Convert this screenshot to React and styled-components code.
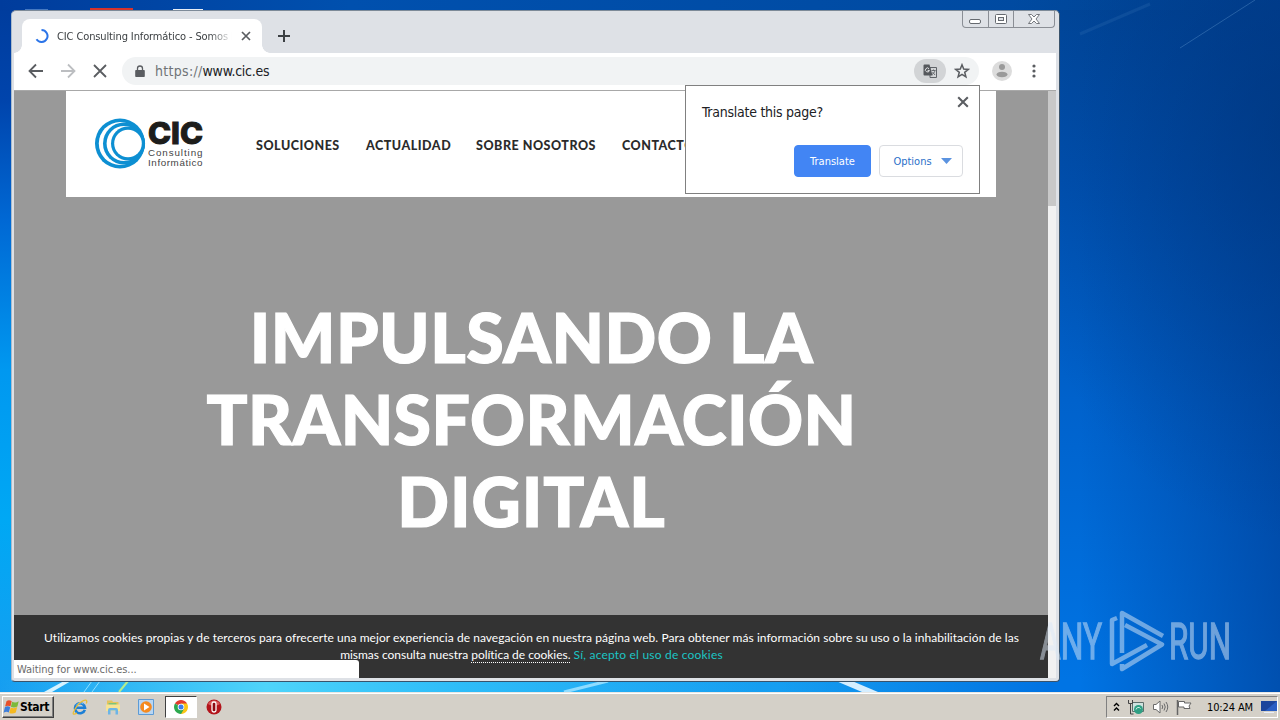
import React from 'react';
import styled, { createGlobalStyle } from 'styled-components';

const GlobalStyle = createGlobalStyle`
  * {
    box-sizing: border-box;
  }
  body {
    margin: 0;
    overflow: hidden;
    font-family: 'DejaVu Sans Condensed', 'DejaVu Sans', sans-serif;
    font-size: 11px;
  }
  button {
    font-family: inherit;
    padding: 0;
  }
`;

const Desktop = styled.div`
  position: relative;
  display: flex;
  flex-direction: column;
  width: 1280px;
  height: 720px;
  overflow: hidden;
  background: radial-gradient(ellipse 300px 420px at 1300px 120px, rgba(0, 44, 100, 0.4), rgba(0, 50, 120, 0) 100%),
    linear-gradient(90deg, transparent 1080px, rgba(0, 62, 150, 0.7) 1290px),
    linear-gradient(90deg, #003c9c, #0050ae 350px, #00489c 1280px) 0 0 / 100% 10px no-repeat,
    linear-gradient(180deg, #00469a 0, #0050b0 180px, #0062cc 400px, #0074e4 680px) 1050px 0 / 230px 100% no-repeat,
    linear-gradient(90deg, transparent 0 780px, #0072e2 1050px),
    linear-gradient(180deg, #003c9c 0, #0044ac 100px, #0068d4 220px, #0098f0 370px, #00a8f4 520px, #1a9cf0 720px);
`;
const Wallpaper = styled.svg`
  position: absolute;
  top: 0;
  left: 0;
`;
const Workspace = styled.main`
  flex: 1;
  padding: 10px 0 0 11px;
`;
const Window = styled.section`
  position: relative;
  display: flex;
  flex-direction: column;
  width: 1049px;
  height: 672px;
  padding: 0 3px 3px 2px;
  border: 1px solid #39536c;
  border-top-color: #7d8a98;
  border-left-color: #a9bacb;
  border-radius: 5px 5px 4px 4px;
  background: #dee1e6;
`;
const TabStrip = styled.div`
  display: flex;
  align-items: flex-end;
  height: 42px;
  padding-left: 8px;
`;
const Tab = styled.div`
  position: relative;
  display: flex;
  align-items: center;
  width: 240px;
  height: 34px;
  padding: 0 11px 0 13px;
  border-radius: 8px 8px 0 0;
  background: #fff;
  &::before,
  &::after {
    content: '';
    position: absolute;
    bottom: 0;
    width: 8px;
    height: 8px;
  }
  &::before {
    left: -8px;
    background: radial-gradient(circle at 0 0, transparent 7.5px, #fff 8px);
  }
  &::after {
    right: -8px;
    background: radial-gradient(circle at 100% 0, transparent 7.5px, #fff 8px);
  }
`;
const TabTitle = styled.span`
  flex: 1;
  margin: 0 9px 0 8px;
  overflow: hidden;
  white-space: nowrap;
  letter-spacing: -0.12px;
  color: #3c4043;
  mask-image: linear-gradient(90deg, #000 152px, transparent 176px);
`;
const NewTab = styled.div`
  display: flex;
  align-items: center;
  height: 34px;
  margin-left: 15px;
`;
const Caption = styled.div`
  position: absolute;
  top: 0;
  right: 4px;
  display: flex;
  height: 17px;
  border: 1px solid #8a8e95;
  border-top: none;
  border-radius: 0 0 4px 4px;
`;
const CaptionButton = styled.div`
  display: flex;
  align-items: center;
  justify-content: center;
  width: ${(props) => props.$width}px;
  border-left: ${(props) => (props.$first ? 'none' : '1px solid #8a8e95')};
`;
const Toolbar = styled.div`
  display: flex;
  align-items: center;
  height: 38px;
  padding: 0 14px 1px 14px;
  border-bottom: 1px solid #a8a8a8;
  background: #fff;
`;
const NavIcons = styled.div`
  display: flex;
  gap: 16px;
`;
const Omnibox = styled.div`
  display: flex;
  align-items: center;
  width: 857px;
  height: 28px;
  margin: 0 13px 0 14px;
  padding: 0 9px 0 12px;
  border-radius: 14px;
  background: #f1f3f4;
`;
const Url = styled.span`
  flex: 1;
  margin-left: 9px;
  font-size: 14px;
  letter-spacing: -0.25px;
  color: #202124;
`;
const Scheme = styled.span`
  letter-spacing: 0.3px;
  color: #6f7377;
`;
const TranslateChip = styled.div`
  display: flex;
  align-items: center;
  justify-content: center;
  width: 32px;
  height: 24px;
  margin-right: 8px;
  border-radius: 12px;
  background: #d2d4d6;
`;
const Avatar = styled.div`
  height: 20px;
  margin-right: 14px;
`;
const Viewport = styled.div`
  display: flex;
  flex: 1;
  background: #f1f1f1;
`;
const Page = styled.div`
  display: flex;
  flex-direction: column;
  align-items: center;
  width: 1034px;
  background: #999;
`;
const Scrollbar = styled.div`
  width: 8px;
`;
const Thumb = styled.div`
  height: 115px;
  background: #c8c8c8;
`;
const SiteHeader = styled.header`
  display: flex;
  align-items: center;
  width: 930px;
  height: 106px;
  padding: 0 0 0 29px;
  background: #fff;
`;
const Menu = styled.nav`
  display: flex;
  gap: 26px;
  margin: 2px 0 0 50px;
`;
const MenuItem = styled.a`
  width: ${(props) => props.$width}px;
  font-family: Lato, sans-serif;
  font-size: 12.5px;
  font-weight: 900;
  letter-spacing: 0.52px;
  white-space: nowrap;
  color: #2b2b2b;
`;
const Headline = styled.h1`
  flex: 1;
  margin: 0;
  padding: 99px 0 0 1px;
  font-family: Lato, sans-serif;
  font-size: 68px;
  font-weight: 900;
  line-height: 82px;
  text-align: center;
  color: #fff;
  -webkit-text-stroke: 1.2px #fff;
`;
const Line = styled.span`
  display: block;
  letter-spacing: ${(props) => props.$spacing}px;
`;
const CookieBar = styled.footer`
  width: 100%;
  height: 63px;
  padding: 14px 0 0 1px;
  font-family: Lato, sans-serif;
  font-size: 12px;
  line-height: 17px;
  letter-spacing: 0.05px;
  text-align: center;
  white-space: nowrap;
  color: #fff;
  background: #333;
`;
const CookieTail = styled.span`
  letter-spacing: -0.03px;
`;
const PolicyLink = styled.a`
  border-bottom: 1px dotted #fff;
`;
const AcceptLink = styled.a`
  letter-spacing: 0.2px;
  color: #1cc5c5;
`;
const Status = styled.div`
  position: absolute;
  left: 2px;
  bottom: 3px;
  width: 345px;
  height: 18px;
  padding-left: 3px;
  line-height: 19px;
  letter-spacing: -0.05px;
  border-radius: 0 3px 0 0;
  color: #6b6b6b;
  background: #fff;
`;
const Popup = styled.div`
  position: absolute;
  top: 74px;
  left: 673px;
  display: flex;
  flex-direction: column;
  justify-content: space-between;
  width: 295px;
  height: 109px;
  padding: 10px 16px 16px;
  border: 1px solid #808080;
  background: #fff;
`;
const PopupTop = styled.div`
  display: flex;
  justify-content: space-between;
  margin-right: -6px;
`;
const PopupTitle = styled.div`
  padding-top: 8px;
  font-size: 14px;
  letter-spacing: -0.26px;
  color: #202124;
`;
const PopupButtons = styled.div`
  display: flex;
  justify-content: flex-end;
  gap: 8px;
`;
const Button = styled.button`
  display: flex;
  align-items: center;
  justify-content: center;
  gap: 9px;
  width: ${(props) => (props.$primary ? 77 : 84)}px;
  height: 32px;
  padding-left: ${(props) => (props.$primary ? 0 : 3)}px;
  border: 1px solid ${(props) => (props.$primary ? '#4285f4' : '#dadce0')};
  border-radius: 4px;
  font-size: 11px;
  color: ${(props) => (props.$primary ? '#fff' : '#2a6fc9')};
  background: ${(props) => (props.$primary ? '#4285f4' : '#fff')};
`;
const Taskbar = styled.div`
  position: relative;
  display: flex;
  align-items: center;
  height: 28px;
  padding: 1px 2px 0;
  border-top: 1px solid #e9e7e3;
  box-shadow: inset 0 1px #fff;
  background: #d4d0c8;
`;
const StartButton = styled.div`
  display: flex;
  align-items: center;
  width: 52px;
  height: 22px;
  border: 1px solid;
  border-color: #fff #404040 #404040 #fff;
  box-shadow: inset -1px -1px #808080;
  font-size: 12px;
  font-weight: 700;
  letter-spacing: -0.3px;
  color: #000;
`;
const QuickLaunch = styled.div`
  display: flex;
  align-items: center;
  gap: 17px;
  margin-left: 18px;
`;
const ActiveTask = styled.div`
  display: flex;
  align-items: center;
  justify-content: center;
  width: 32px;
  height: 22px;
  margin: 0 9px 0 11px;
  border: 1px solid;
  border-color: #404040 #fff #fff #404040;
  background: #fff;
`;
const Tray = styled.div`
  display: flex;
  align-items: center;
  gap: 7px;
  width: 172px;
  height: 22px;
  margin-left: auto;
  padding-left: 6px;
  border: 1px solid;
  border-color: #808080 #fff #fff #808080;
`;
const Clock = styled.span`
  width: 47px;
  margin: 0 0 0 7px;
  white-space: nowrap;
  letter-spacing: -0.12px;
  color: #000;
`;
const Watermark = styled.svg`
  position: absolute;
  left: 1038px;
  top: 608px;
`;

const Cross = ({ size, width }) => (
  <svg width={size} height={size} viewBox="0 0 10 10" stroke="#5a5d61" strokeWidth={width}>
    <path d="M1 1l8 8M9 1L1 9" />
  </svg>
);

const Logo = () => (
  <svg width="111" height="52" viewBox="0 0 111 52">
    <circle cx="25" cy="25.500" r="25" fill="#0d8fd2" />
    <circle cx="25.200" cy="25.500" r="21.400" fill="#fff" />
    <circle cx="29" cy="25.500" r="21" fill="#0d8fd2" />
    <circle cx="29.200" cy="25.500" r="17.600" fill="#fff" />
    <circle cx="33" cy="25.500" r="17" fill="#0d8fd2" />
    <circle cx="33" cy="25.500" r="13.800" fill="#fff" />
    <text x="53" y="26" fontFamily="Inter" fontWeight="800" fontSize="30" textLength="55" lengthAdjust="spacingAndGlyphs" fill="#1d1d1b" stroke="#1d1d1b">
      CIC
    </text>
    <text x="53" y="37.500" fontFamily="Liberation Sans" fontSize="9.800" textLength="54.500" fill="#444">
      Consulting
    </text>
    <text x="53" y="47.500" fontFamily="Liberation Sans" fontSize="9.800" textLength="54.500" fill="#444">
      Informático
    </text>
  </svg>
);

const TranslateIcon = () => (
  <svg width="15" height="15" viewBox="0 0 15 15">
    <path d="M7 3.500h6.500v10H7z" fill="#d2d4d6" stroke="#5f6368" />
    <path d="M8.500 6.500h4M10.500 5.500v1M12 6.500c-.5 2-1.500 3-3 4M9.500 8l2.500 3" fill="none" stroke="#5f6368" strokeWidth=".9" />
    <path d="M1.500.5h5L9.500 11.500h-8a1 1 0 0 1-1-1v-9a1 1 0 0 1 1-1z" fill="#55585c" />
    <path d="M6 4.700a2 2 0 1 0 .4 1.700H4.600" fill="none" stroke="#e4e5e7" />
  </svg>
);

const WindowsFlag = () => (
  <svg width="17" height="16" viewBox="0 0 17 16">
    <path d="M3.500 2.300c2-1.600 3.700-1 5.200 0L7.400 7.500c-1.700-1-3.300-1-5.300 0z" fill="#e8502a" />
    <path d="M9.200 2.700c2 1 4.300 1 6.500-.5L14.400 7.500c-2 1.300-4.500 1.300-6.500.3z" fill="#7db93b" />
    <path d="M1.900 8.200c2-1.300 3.700-1 5.300 0L5.800 13.600c-1.700-1-3.200-1-5.200.2z" fill="#3d7edb" />
    <path d="M7.700 8.500c2 1 4.500 1 6.500-.4L12.800 13.500c-2 1.300-4.500 1.300-6.500.4z" fill="#f5b921" />
  </svg>
);

const Explorer = () => (
  <svg width="16" height="16" viewBox="0 0 16 16">
    <path d="M12.800 10.800A5 5 0 1 1 13 8.700H4.500" fill="none" stroke="#1c7fd6" strokeWidth="2.600" />
    <path d="M4.300 6.500a4.500 4.500 0 0 1 7-1.500" fill="none" stroke="#7cc8f5" strokeWidth=".9" />
    <path d="M2.300 11.500C0 15.500 1.500 16 5 14.200M9 3C13 .2 16 .3 14.300 4.500M2.300 11.500C4 8 6 5 9 3" fill="none" stroke="#e9bd35" strokeWidth="1.300" />
  </svg>
);

const Folder = () => (
  <svg width="16" height="16" viewBox="0 0 16 16">
    <path d="M2 1.500h5l1 1.500h5.500v8H2z" fill="#e5c35c" />
    <path d="M3.500 4h8v5h-8z" fill="#7cc47a" />
    <path d="M1 5.500h14v6.500H1z" fill="#f7e395" />
    <path d="M3 15.500V11a2 2 0 0 1 2-2h6a2 2 0 0 1 2 2v4.500h-2.500V11.500h-5v4z" fill="#6db5e6" />
  </svg>
);

const MediaPlayer = () => (
  <svg width="16" height="16" viewBox="0 0 16 16">
    <path d="M.5.5h15v15H.5z" fill="#b9d6f2" stroke="#5c9bd6" />
    <circle cx="8" cy="8" r="5.800" fill="#f58a1f" />
    <path d="M6 4.500L11.500 8 6 11.500z" fill="#fff" />
  </svg>
);

const Chrome = () => (
  <svg width="14" height="14" viewBox="0 0 14 14">
    <path d="M7 7L.94 3.500a7 7 0 0 1 12.120 0z" fill="#e33b2e" />
    <path d="M7 7V3.500h6.060A7 7 0 0 1 7 14z" fill="#fbc516" />
    <path d="M7 7l3 2L7 14A7 7 0 0 1 .94 3.500z" fill="#2da94f" />
    <circle cx="7" cy="7" r="3.300" fill="#fff" />
    <circle cx="7" cy="7" r="2.500" fill="#3b7ded" />
  </svg>
);

const Opera = () => (
  <svg width="16" height="16" viewBox="0 0 16 16">
    <circle cx="8" cy="8" r="7.500" fill="#b3141b" />
    <path d="M2 5a7 7 0 0 1 12 0c-3 2-9 2-12 0z" fill="#d9595b" />
    <rect x="6" y="3" width="4" height="10" rx="1.800" fill="#8d0a12" stroke="#fff" strokeWidth="1.300" />
  </svg>
);

const menu = [
  ['SOLUCIONES', 84],
  ['ACTUALIDAD', 84],
  ['SOBRE NOSOTROS', 120],
  ['CONTACTO', 74],
];

const App = () => {
  return (
    <Desktop>
      <GlobalStyle />
      <Wallpaper width="1280" height="720">
        <defs>
          <linearGradient id="glow">
            <stop offset="0" stopColor="#4fd4fa" stopOpacity="0" />
            <stop offset=".35" stopColor="#4fd4fa" />
            <stop offset=".6" stopColor="#35c4fa" stopOpacity=".8" />
            <stop offset="1" stopColor="#35c4fa" stopOpacity="0" />
          </linearGradient>
        </defs>
        <rect y="680" width="760" height="12" fill="url(#glow)" />
        <path d="M44 692l20-11h7l-19 11z" fill="#d6f3ff" />
        <path d="M84 692l8-11M92 692l8-11" stroke="#8fe0ff" />
        <path d="M119 692l9-11" stroke="#b5ec8c" strokeWidth="2" />
        <path d="M564 692l44-11" stroke="#8fdcff" strokeWidth="3" />
        <path d="M836 681h16l26 11h-16z" fill="#d5eeff" />
        <path d="M1180 48L1255 0" stroke="#6ba4d8" strokeOpacity=".35" />
        <path d="M1080 34l70-30" stroke="#6ba4d8" strokeOpacity=".12" strokeWidth="3" />
        <path d="M25 10h23" stroke="#8db4e4" strokeWidth="1" />
        <path d="M90 9h43" stroke="#d8332b" strokeWidth="2" />
        <path d="M173 9.500h30" stroke="#e8eef6" strokeWidth="1" />
      </Wallpaper>
      <Workspace>
        <Window>
          <TabStrip>
            <Tab>
              <svg width="14" height="14" viewBox="0 0 14 14" fill="none" stroke="#2b74e8" strokeWidth="2">
                <path d="M6.500 1a6 6 0 1 1-5 9.300" />
              </svg>
              <TabTitle>CIC Consulting Informático - Somos l</TabTitle>
              <Cross size={10} width={1.7} />
            </Tab>
            <NewTab>
              <svg width="14" height="14" viewBox="0 0 14 14" stroke="#3c4043" strokeWidth="2">
                <path d="M7 1v12M1 7h12" />
              </svg>
            </NewTab>
          </TabStrip>
          <Caption>
            <CaptionButton $width={25} $first>
              <svg width="13" height="17" fill="#fff" stroke="#666a70">
                <rect x=".5" y="8.500" width="11" height="4" rx="1.500" />
              </svg>
            </CaptionButton>
            <CaptionButton $width={25}>
              <svg width="12" height="11" fill="#fff" stroke="#666a70">
                <rect x=".5" y=".5" width="11" height="9" rx="1" />
                <rect x="3.500" y="3.500" width="5" height="3" fill="#dee1e6" />
              </svg>
            </CaptionButton>
            <CaptionButton $width={41}>
              <svg width="12" height="10" viewBox="0 0 12 10">
                <path d="M.5.5h3L6 3 8.500.5h3L8 5l3.500 4.500h-3L6 7 3.500 9.500h-3L4 5z" fill="#fff" stroke="#666a70" strokeWidth=".9" />
              </svg>
            </CaptionButton>
          </Caption>
          <Toolbar>
            <NavIcons>
              <svg width="16" height="16" viewBox="0 0 16 16" fill="none" stroke="#5a5d61" strokeWidth="1.800">
                <path d="M15 8H2M8 1.500L1.500 8 8 14.500" />
              </svg>
              <svg width="16" height="16" viewBox="0 0 16 16" fill="none" stroke="#bcbec1" strokeWidth="1.800">
                <path d="M1 8h13M8 1.500L14.500 8 8 14.500" />
              </svg>
              <svg width="16" height="16" viewBox="0 0 16 16" fill="none" stroke="#5a5d61" strokeWidth="1.800">
                <path d="M2 2l12 12M14 2L2 14" />
              </svg>
            </NavIcons>
            <Omnibox>
              <svg width="12" height="13" viewBox="0 0 12 13">
                <path d="M2 5h8a.8.8 0 0 1 .8.8v5.400a.8.8 0 0 1-.8.8H2a.8.8 0 0 1-.8-.8V5.800A.8.8 0 0 1 2 5z" fill="#5a5d61" />
                <path d="M3.500 5V3.500a2.500 2.500 0 0 1 5 0V5" fill="none" stroke="#5a5d61" strokeWidth="1.300" />
              </svg>
              <Url>
                <Scheme>https://</Scheme>www.cic.es
              </Url>
              <TranslateChip>
                <TranslateIcon />
              </TranslateChip>
              <svg width="16" height="16" viewBox="0 0 16 16" fill="none" stroke="#5a5d61" strokeWidth="1.500">
                <path d="M8 1.800l1.700 4.300 4.600.3-3.600 2.900 1.200 4.500L8 11.300l-3.900 2.500 1.200-4.500L1.700 6.400l4.600-.3z" />
              </svg>
            </Omnibox>
            <Avatar>
              <svg width="20" height="20" viewBox="0 0 20 20">
                <circle cx="10" cy="10" r="10" fill="#dcdcdc" />
                <circle cx="10" cy="6" r="3" fill="#9a9a9a" />
                <ellipse cx="10" cy="13.500" rx="5.500" ry="2.800" fill="#9a9a9a" />
              </svg>
            </Avatar>
            <svg width="16" height="16" fill="#5a5d61">
              <circle cx="8" cy="3" r="1.600" />
              <circle cx="8" cy="8" r="1.600" />
              <circle cx="8" cy="13" r="1.600" />
            </svg>
          </Toolbar>
          <Viewport>
            <Page>
              <SiteHeader>
                <Logo />
                <Menu>
                  {menu.map(([label, width]) => (
                    <MenuItem key={label} $width={width}>
                      {label}
                    </MenuItem>
                  ))}
                </Menu>
              </SiteHeader>
              <Headline>
                <Line $spacing={0.5}>IMPULSANDO LA</Line>
                <Line $spacing={0.4}>TRANSFORMACIÓN</Line>
                <Line $spacing={1}>DIGITAL</Line>
              </Headline>
              <CookieBar>
                Utilizamos cookies propias y de terceros para ofrecerte una mejor experiencia de navegación en nuestra
                página web. Para obtener más información sobre su uso o la inhabilitación de las
                <br />
                <CookieTail>
                  mismas consulta nuestra <PolicyLink>política de cookies.</PolicyLink>{' '}
                </CookieTail>
                <AcceptLink>Sí, acepto el uso de cookies</AcceptLink>
              </CookieBar>
            </Page>
            <Scrollbar>
              <Thumb />
            </Scrollbar>
          </Viewport>
          <Status>Waiting for www.cic.es...</Status>
          <Popup>
            <PopupTop>
              <PopupTitle>Translate this page?</PopupTitle>
              <Cross size={12} width={1.7} />
            </PopupTop>
            <PopupButtons>
              <Button $primary>Translate</Button>
              <Button>
                Options
                <svg width="11" height="6">
                  <path d="M0 0h11L5.500 6z" fill="#5b93e0" />
                </svg>
              </Button>
            </PopupButtons>
          </Popup>
        </Window>
      </Workspace>
      <Taskbar>
        <StartButton>
          <WindowsFlag />
          Start
        </StartButton>
        <QuickLaunch>
          <Explorer />
          <Folder />
          <MediaPlayer />
        </QuickLaunch>
        <ActiveTask>
          <Chrome />
        </ActiveTask>
        <Opera />
        <Tray>
          <svg width="7" height="10" viewBox="0 0 7 10" fill="none" stroke="#000" strokeWidth="1.400">
            <path d="M1 4l2.500-2.500L6 4M1 8.500L3.500 6 6 8.500" />
          </svg>
          <svg width="18" height="16" viewBox="0 0 18 16">
            <path d="M5.500 3.500h11v9h-11z" fill="#cfe3e0" stroke="#5d6e6b" />
            <circle cx="11.500" cy="10.500" r="4.500" fill="#2f9f83" />
            <path d="M9 10.500a2.500 2.500 0 0 1 4.500-1" fill="none" stroke="#d8f3ea" />
            <path d="M1.500 1v3.500h4V1M3.500 4.500V15h3" fill="none" stroke="#444" />
          </svg>
          <svg width="17" height="14" viewBox="0 0 17 14" fill="none" stroke="#6a6a6a">
            <path d="M1.500 4.500h2.500L8 1v12L4 9.500H1.500z" fill="#fff" />
            <path d="M10 5q1.500 2 0 4M12 3.500q2.500 3.500 0 7M14 2q3.500 5 0 10" />
          </svg>
          <svg width="17" height="15" viewBox="0 0 17 15">
            <path d="M2.500 1.500h6v1.500H15l-2 3 1 2.500H8v-1.500H2.500z" fill="#fff" stroke="#666" />
            <path d="M1.500 0v15" stroke="#666" strokeWidth="1.500" />
          </svg>
          <Clock>10:24 AM</Clock>
          <svg width="16" height="14" viewBox="0 0 16 14">
            <path d="M0 1h16v10H0z" fill="#2a5fc4" />
            <path d="M0 1h16L4 11H0z" fill="#1c459c" />
            <path d="M3 12.500h10" stroke="#e8eefa" />
          </svg>
        </Tray>
      </Taskbar>
      <Watermark width="200" height="66" opacity=".5">
        <g fill="#dce9f7" stroke="#dce9f7" strokeWidth="1.300" fontFamily="Roboto" fontSize="50">
          <text x="2" y="50.500" textLength="62" lengthAdjust="spacingAndGlyphs">
            ANY
          </text>
          <text x="131" y="50.500" textLength="62" lengthAdjust="spacingAndGlyphs">
            RUN
          </text>
        </g>
        <g fill="none" stroke="#dce9f7" strokeWidth="4.500" strokeLinejoin="round">
          <path d="M125 28L84 5v40" />
          <path d="M87 17l37 19.500L84 61v-5" />
          <path d="M79 10l-5 2v44l35-19" />
        </g>
      </Watermark>
    </Desktop>
  );
};

export default App;
